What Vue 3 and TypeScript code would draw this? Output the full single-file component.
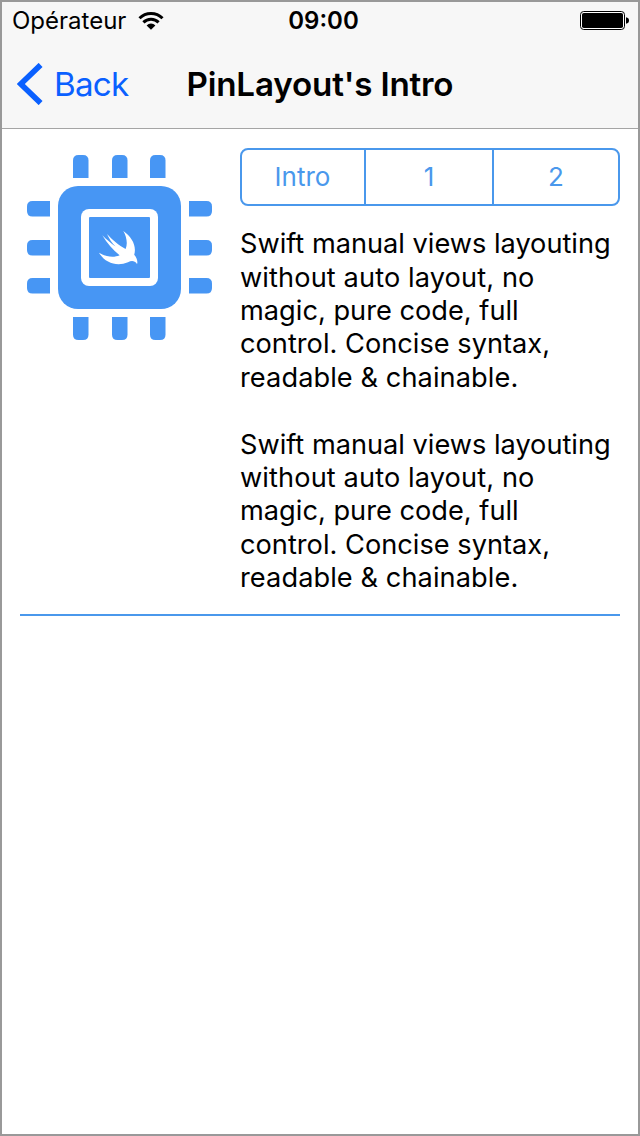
<script setup lang="ts">
interface Line {
  text: string
  spacing: number
}

const tabs: string[] = ['Intro', '1', '2']

const paragraph: Line[] = [
  { text: 'Swift manual views layouting', spacing: -0.01 },
  { text: 'without auto layout, no', spacing: 0.11 },
  { text: 'magic, pure code, full', spacing: 0.01 },
  { text: 'control. Concise syntax,', spacing: 0.01 },
  { text: 'readable & chainable.', spacing: 0.08 },
]
const paragraphs: Line[][] = [paragraph, paragraph]
const pinOffsets: number[] = [46, 85, 123]
</script>

<template>
  <div class="screen">
    <header class="top">
      <div class="status">
        <div class="carrier">
          <span class="carrier-name">Opérateur</span>
          <svg class="wifi" width="26" height="20" viewBox="0 0 26 20">
            <g fill="none" stroke="#000" stroke-width="3">
              <path d="M1.5 7.2A16.2 16.2 0 0 1 24.5 7.2" />
              <path d="M5.4 11.4A10.7 10.7 0 0 1 20.6 11.4" />
            </g>
            <path d="M8.6 14.4A6.2 6.2 0 0 1 17.4 14.4L13 18.8Z" />
          </svg>
        </div>
        <span class="clock">09:00</span>
        <svg class="battery" width="50" height="20" viewBox="0 0 50 20">
          <rect x=".5" y=".5" width="44" height="18" rx="3.2" fill="#fff" stroke="#000" />
          <rect x="2" y="2" width="41" height="15" rx="1.8" />
          <path d="M46 6.2Q49 6.8 49 9.5T46 12.8Z" />
        </svg>
      </div>
      <nav class="nav">
        <a class="back">
          <svg width="26" height="42" viewBox="0 0 26 42">
            <path d="M23.6 1.9L3.8 21L23.6 40.1" fill="none" stroke="#0a60ff" stroke-width="5.6" />
          </svg>
          <span class="back-label">Back</span>
        </a>
        <h1 class="title">PinLayout's Intro</h1>
      </nav>
    </header>

    <main class="content">
      <svg class="chip" width="185" height="185" viewBox="0 0 185 185" fill="#4796f4">
        <g v-for="p in pinOffsets" :key="p">
          <path :d="`M${p} 23V5.5Q${p} 0 ${p + 5.5} 0H${p + 10}Q${p + 15.5} 0 ${p + 15.5} 5.5V23Z`" />
          <path :d="`M${p} 162V179.5Q${p} 185 ${p + 5.5} 185H${p + 10}Q${p + 15.5} 185 ${p + 15.5} 179.5V162Z`" />
          <path :d="`M23 ${p}H5.5Q0 ${p} 0 ${p + 5.5}V${p + 10}Q0 ${p + 15.5} 5.5 ${p + 15.5}H23Z`" />
          <path :d="`M162 ${p}H179.5Q185 ${p} 185 ${p + 5.5}V${p + 10}Q185 ${p + 15.5} 179.5 ${p + 15.5}H162Z`" />
        </g>
        <rect x="31" y="31" width="123" height="123" rx="20" />
        <rect x="54" y="54" width="77" height="77" rx="8" fill="#fff" />
        <rect x="62" y="62" width="61" height="61" rx="1" />
        <path
          transform="translate(-27 -155)"
          fill="#fff"
          d="M123.3 231C132 237 136.8 246 134.2 254.8C137 258 138 262 137 264C134.5 260.5 131.5 260.5 128 262.3C117 267 105 263 99 252.7C106 257 114 257.8 119.6 255.2C113 250 107 243 102.3 235.3C106 239 111 243.5 115.5 246.5C112 243 109 238.5 107 234C112 239.5 119 245.5 125.6 249C128 243.5 126.5 236.5 123.3 231Z"
        />
      </svg>
      <div class="column">
        <div class="segments">
          <button v-for="t in tabs" :key="t" class="segment" type="button">{{ t }}</button>
        </div>
        <p v-for="(lines, i) in paragraphs" :key="i" class="text">
          <span
            v-for="line in lines"
            :key="line.text"
            class="line"
            :style="{ letterSpacing: line.spacing + 'px' }"
          >{{ line.text }}</span>
        </p>
      </div>
    </main>
  </div>
</template>

<style>
body {
  margin: 0;
}
</style>

<style scoped>
.screen {
  box-sizing: border-box;
  width: 640px;
  height: 1136px;
  border: 2px solid #999;
  background: #fff;
  color: #000;
  font-family: Inter, Roboto, sans-serif;
  overflow: hidden;
}
.top {
  box-sizing: border-box;
  height: 127px;
  background: #f7f7f7;
  border-bottom: 1px solid #a5a5a5;
}
.status {
  display: grid;
  grid-template-columns: 1fr auto 1fr;
  align-items: center;
  height: 37px;
  padding: 0 8px 0 10px;
}
.carrier {
  display: flex;
  align-items: center;
}
.carrier-name {
  width: 125.5px;
  font-size: 24px;
}
.clock {
  padding-left: 5px;
  font-size: 24px;
  font-weight: 600;
}
.battery {
  justify-self: end;
}
.nav {
  display: grid;
  grid-template-columns: 184.5px 1fr;
  align-items: center;
  height: 90px;
}
.back {
  display: flex;
  align-items: center;
  gap: 11px;
  padding-left: 15px;
  color: #0a60ff;
}
.back-label {
  font-size: 33.2px;
  letter-spacing: -0.75px;
}
.title {
  margin: 0;
  font-size: 33.2px;
  font-weight: 600;
  letter-spacing: -0.18px;
  white-space: nowrap;
}
.content {
  display: grid;
  grid-template-columns: 185px 380px;
  column-gap: 28px;
  margin: 0 18px;
  padding: 19px 0 0 7px;
  height: 466px;
  border-bottom: 2px solid #4a98ec;
}
.chip {
  margin-top: 7px;
}
.segments {
  box-sizing: border-box;
  display: grid;
  grid-template-columns: 122px 128px 126px;
  height: 58px;
  margin-bottom: 21.2px;
  border: 2px solid #4a98ec;
  border-radius: 8px;
}
.segment {
  padding: 0 1px 1px 0;
  border: 0;
  background: none;
  color: #4a98ec;
  font: 26px Inter, Roboto, sans-serif;
}
.segment + .segment {
  padding-right: 0;
  border-left: 2px solid #4a98ec;
}
.text {
  margin: 0 0 33.4px;
  font-size: 27.2px;
  line-height: 33.4px;
}
.line {
  display: block;
  white-space: nowrap;
}
</style>
